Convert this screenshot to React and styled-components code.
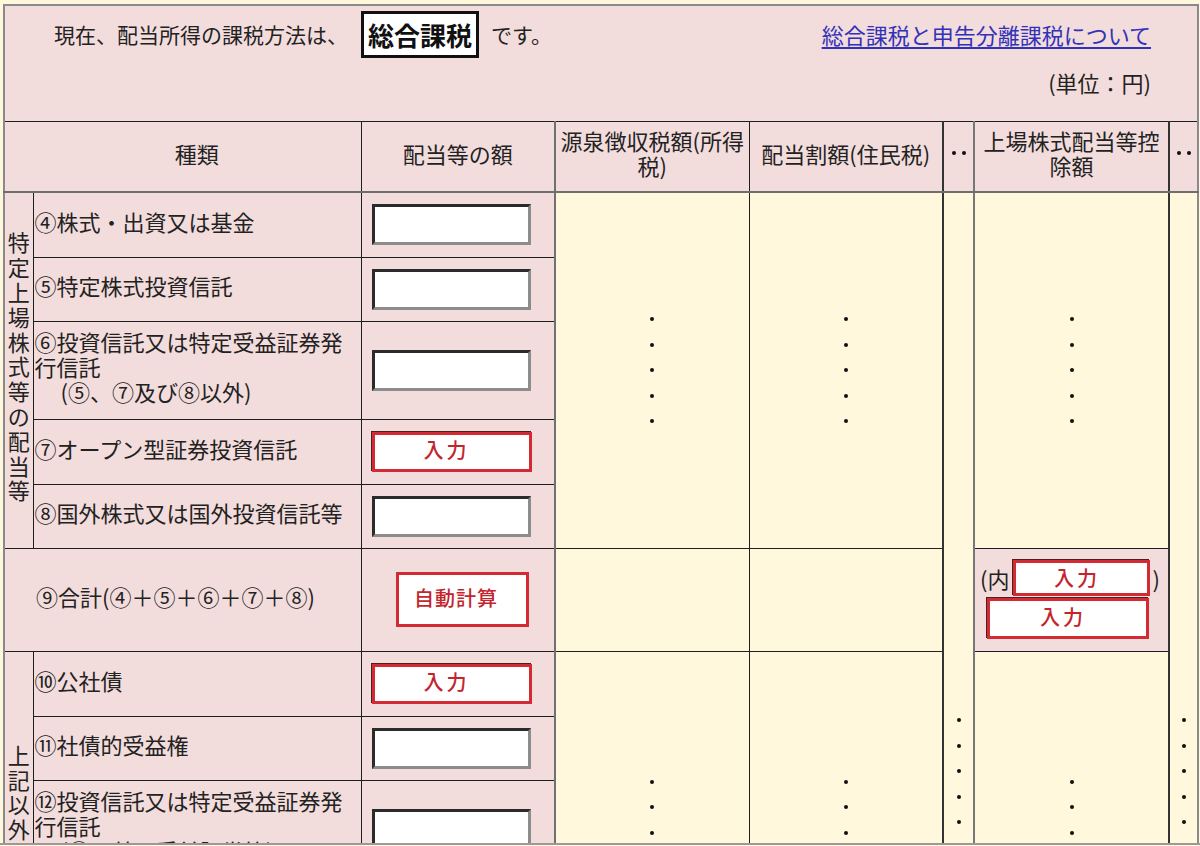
import React from 'react';
import styled, { createGlobalStyle } from 'styled-components';

const PINK = '#f2dcdc';
const YELLOW = '#fff8dc';
const LINE = '#1e1e1e';

const GlobalStyle = createGlobalStyle`
  html, body {
    margin: 0;
    padding: 0;
    overflow: hidden;
  }
  body {
    background: ${YELLOW};
    color: #222;
    font-family: "Noto Sans CJK JP", "Noto Sans", sans-serif;
  }
`;

// upper / lower row groups of the form
const upperRows = [
  { h: 65, label: '④株式・出資又は基金', kind: 'field' },
  { h: 64, label: '⑤特定株式投資信託', kind: 'field' },
  { h: 98, label: '⑥投資信託又は特定受益証券発行信託', note: '(⑤、⑦及び⑧以外)', kind: 'field' },
  { h: 65, label: '⑦オープン型証券投資信託', kind: 'button' },
  { h: 64, label: '⑧国外株式又は国外投資信託等', kind: 'field' },
];

const lowerRows = [
  { h: 65, label: '⑩公社債', kind: 'button' },
  { h: 64, label: '⑪社債的受益権', kind: 'field' },
  { h: 98, label: '⑫投資信託又は特定受益証券発行信託', note: '(⑥以外の受益証券等)', kind: 'field' },
  { h: 64, label: '⑬特定目的信託', kind: 'field' },
  { h: 98, label: '⑭国外公社債又は国外投資信託等', note: '(⑧以外)', kind: 'field' },
];

const Frame = styled.div`
  box-sizing: border-box;
  height: 845px;
  padding: 4px 0 0 3px;
  overflow: hidden;
  border-bottom: 2px solid #9a9a9a;
`;

const Table = styled.table`
  width: 1194px;
  table-layout: fixed;
  border-collapse: collapse;
  border: 2px solid #8a8a8a;
  font-family: "Noto Sans CJK JP", "Noto Sans", sans-serif;
  font-size: 22px;
  line-height: 25px;
  color: #222;
`;

const Col = styled.col`
  width: ${p => p.$w}px;
  border-left: ${p => (p.$edge ? `2px solid ${p.$edge}` : 'none')};
`;

const Tr = styled.tr`
  height: ${p => p.$h}px;
`;

const CaptionCell = styled.td`
  background: ${PINK};
  vertical-align: top;
  padding: 5px 46px 0 49px;
  border-bottom: 1px solid ${LINE};
`;

const CaptionLine = styled.div`
  display: flex;
  align-items: center;
  justify-content: space-between;
  height: 47px;
`;

const Lead = styled.div`
  display: flex;
  align-items: center;
  font-size: 21px;
`;

const Method = styled.span`
  box-sizing: border-box;
  height: 47px;
  margin: 0 12px 0 13px;
  padding: 0 4px;
  border: 3px solid #111;
  background: #fff;
  font-size: 26px;
  font-weight: 700;
  line-height: 41px;
  color: #111;
`;

const HelpLink = styled.a`
  color: #3232b8;
  text-decoration: underline;
  text-underline-offset: 3px;
`;

const Unit = styled.div`
  margin-top: 12px;
  text-align: right;
`;

const Th = styled.th`
  background: ${PINK};
  font-weight: 400;
  text-align: center;
  vertical-align: middle;
  padding: 0 2px 6px ${p => p.$indent || 2}px;
  border: 1px solid ${LINE};
  border-bottom: 2px solid #6e6e6e;
`;

const Cell = styled.td`
  background: ${p => (p.$tone === 'yellow' ? YELLOW : PINK)};
  vertical-align: ${p => p.$align || 'middle'};
  text-align: left;
  padding: ${p => (p.$top ? `${p.$top}px 0 0` : '0 1px')};
  border: 1px solid ${LINE};
`;

const Label = styled(Cell)`
  padding-left: ${p => p.$indent || 1}px;
  padding-bottom: 7px;
`;

const SideLabel = styled(Cell)`
  padding: 0 0 9px;
  text-align: center;
  word-break: break-all;
  line-height: 24.8px;
`;

const Note = styled.span`
  display: inline-block;
  padding-left: 26px;
`;

const Slot = styled(Cell)`
  padding-left: ${p => p.$pad || 10}px;
`;

const Field = styled.input`
  display: block;
  box-sizing: border-box;
  width: 159px;
  height: 41px;
  margin: 0;
  padding: 0 4px;
  background: #fff;
  border-style: solid;
  border-width: 3px;
  border-color: #2b2b2b #8c8c8c #8c8c8c #2b2b2b;
  font: inherit;
`;

const RedButton = styled.button`
  display: block;
  box-sizing: border-box;
  width: ${p => p.$w}px;
  height: ${p => p.$h}px;
  margin: ${p => p.$margin || 0};
  padding: 0 ${p => p.$shift || 10}px 4px 0;
  background: #fff;
  border: 3px solid #d32a34;
  box-shadow: ${p => (p.$flat ? 'none' : '-1px -1px 0 #4a2020')};
  color: #c3252e;
  font-family: "Noto Sans CJK JP", "Noto Sans", sans-serif;
  font-size: 20px;
  font-weight: 500;
  letter-spacing: ${p => p.$spacing || 3}px;
  cursor: pointer;
`;

const Within = styled.div`
  display: flex;
  align-items: center;
  padding-left: 4px;
`;

const DotStack = styled.div`
  display: flex;
  flex-direction: ${p => (p.$row ? 'row' : 'column')};
  align-items: center;
  justify-content: center;
  gap: ${p => (p.$row ? '6px' : '21.5px')};
`;

const Dot = styled.span`
  display: block;
  width: 4px;
  height: 4px;
  border-radius: 50%;
  background: #111;
`;

const Dots = ({ count = 5, row }) => (
  <DotStack $row={row}>
    {Array.from({ length: count }, (_, i) => (
      <Dot key={i} />
    ))}
  </DotStack>
);

const Amount = ({ kind }) =>
  kind === 'button' ? (
    <RedButton type="button" $w={160} $h={40}>入力</RedButton>
  ) : (
    <Field type="text" />
  );

const ItemLabel = ({ row }) => (
  <Label>
    {row.label}
    {row.note && (
      <>
        <br />
        <Note>{row.note}</Note>
      </>
    )}
  </Label>
);

export default function App() {
  const [first, ...restUpper] = upperRows;
  const [firstLower, ...restLower] = lowerRows;

  return (
    <>
      <GlobalStyle />
      <Frame>
        <Table>
          <colgroup>
            <Col $w={29} />
            <Col $w={328} />
            <Col $w={194} />
            <Col $w={194} $edge="#707070" />
            <Col $w={194} />
            <Col $w={31} $edge="#333" />
            <Col $w={195} $edge="#777" />
            <Col $w={29} $edge="#333" />
          </colgroup>
          <tbody>
            <Tr $h={116}>
              <CaptionCell colSpan={8}>
                <CaptionLine>
                  <Lead>
                    現在、配当所得の課税方法は、<Method>総合課税</Method>です。
                  </Lead>
                  <HelpLink href="#">総合課税と申告分離課税について</HelpLink>
                </CaptionLine>
                <Unit>(単位：円)</Unit>
              </CaptionCell>
            </Tr>

            <Tr $h={71}>
              <Th colSpan={2} $indent={30}>種類</Th>
              <Th>配当等の額</Th>
              <Th>源泉徴収税額(所得税)</Th>
              <Th>配当割額(住民税)</Th>
              <Th><Dots count={2} row /></Th>
              <Th>上場株式配当等控除額</Th>
              <Th><Dots count={2} row /></Th>
            </Tr>

            <Tr $h={first.h}>
              <SideLabel rowSpan={5}>特定上場株式等の配当等</SideLabel>
              <ItemLabel row={first} />
              <Slot><Amount kind={first.kind} /></Slot>
              <Cell $tone="yellow" rowSpan={5}><Dots /></Cell>
              <Cell $tone="yellow" rowSpan={5}><Dots /></Cell>
              <Cell $tone="yellow" rowSpan={11} $align="top" $top={525}><Dots /></Cell>
              <Cell $tone="yellow" rowSpan={5}><Dots /></Cell>
              <Cell $tone="yellow" rowSpan={11} $align="top" $top={525}><Dots /></Cell>
            </Tr>
            {restUpper.map(row => (
              <Tr key={row.label} $h={row.h}>
                <ItemLabel row={row} />
                <Slot><Amount kind={row.kind} /></Slot>
              </Tr>
            ))}

            <Tr $h={103}>
              <Label colSpan={2} $indent={31}>⑨合計(④＋⑤＋⑥＋⑦＋⑧)</Label>
              <Slot $pad={34}>
                <RedButton type="button" $w={133} $h={55} $flat $spacing={1} $shift={12}>
                  自動計算
                </RedButton>
              </Slot>
              <Cell $tone="yellow" />
              <Cell $tone="yellow" />
              <Cell>
                <Within>
                  (内
                  <RedButton type="button" $w={137} $h={36} $margin="0 2px 0 4px">入力</RedButton>)
                </Within>
                <RedButton type="button" $w={162} $h={41} $margin="2px 0 0 11px">入力</RedButton>
              </Cell>
            </Tr>

            <Tr $h={firstLower.h}>
              <SideLabel rowSpan={5}>上記以外の配当等</SideLabel>
              <ItemLabel row={firstLower} />
              <Slot><Amount kind={firstLower.kind} /></Slot>
              <Cell $tone="yellow" rowSpan={5}><Dots count={6} /></Cell>
              <Cell $tone="yellow" rowSpan={5}><Dots count={6} /></Cell>
              <Cell $tone="yellow" rowSpan={5}><Dots count={6} /></Cell>
            </Tr>
            {restLower.map(row => (
              <Tr key={row.label} $h={row.h}>
                <ItemLabel row={row} />
                <Slot><Amount kind={row.kind} /></Slot>
              </Tr>
            ))}

            <Tr $h={103}>
              <Label colSpan={2} $indent={31}>⑮合計(⑩＋⑪＋⑫＋⑬＋⑭)</Label>
              <Slot $pad={34}>
                <RedButton type="button" $w={133} $h={55} $flat $spacing={1} $shift={12}>
                  自動計算
                </RedButton>
              </Slot>
              <Cell $tone="yellow" />
              <Cell $tone="yellow" />
              <Cell $tone="yellow" />
            </Tr>
          </tbody>
        </Table>
      </Frame>
    </>
  );
}
